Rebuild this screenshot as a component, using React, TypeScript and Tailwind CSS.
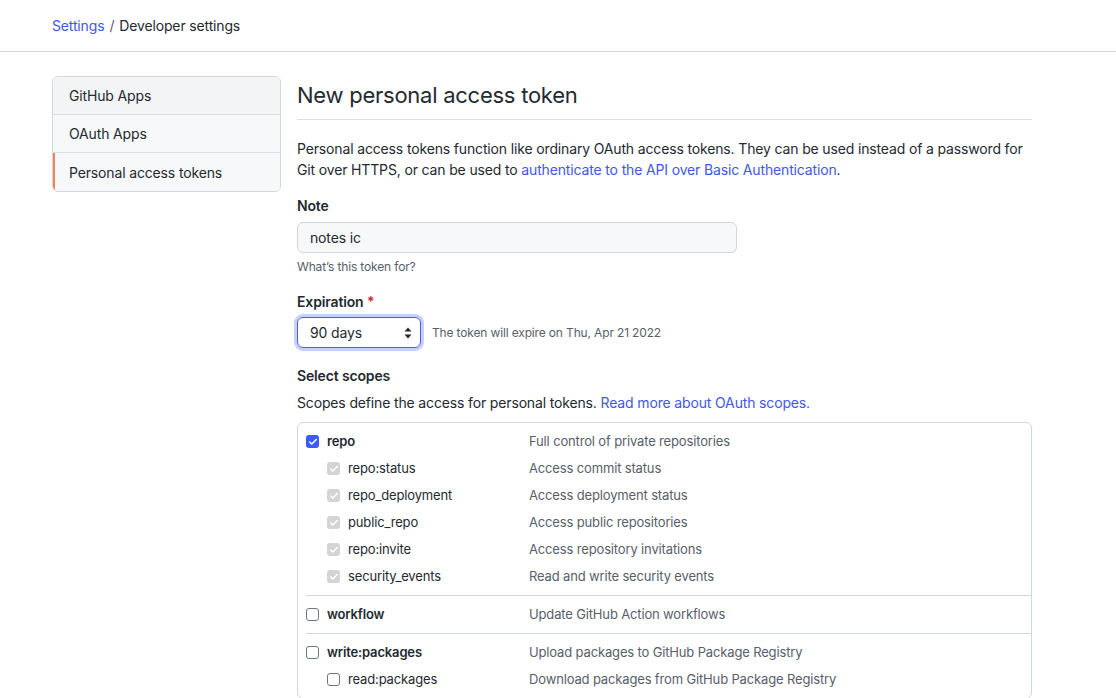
import { Check } from "lucide-react";

type Scope = { name: string; desc: string; checked?: boolean; disabled?: boolean; sub?: boolean };

const groups: Scope[][] = [
  [
    { name: "repo", desc: "Full control of private repositories", checked: true },
    { name: "repo:status", desc: "Access commit status", checked: true, disabled: true, sub: true },
    { name: "repo_deployment", desc: "Access deployment status", checked: true, disabled: true, sub: true },
    { name: "public_repo", desc: "Access public repositories", checked: true, disabled: true, sub: true },
    { name: "repo:invite", desc: "Access repository invitations", checked: true, disabled: true, sub: true },
    { name: "security_events", desc: "Read and write security events", checked: true, disabled: true, sub: true },
  ],
  [{ name: "workflow", desc: "Update GitHub Action workflows" }],
  [
    { name: "write:packages", desc: "Upload packages to GitHub Package Registry" },
    { name: "read:packages", desc: "Download packages from GitHub Package Registry", sub: true },
  ],
];

function Box({ checked, disabled }: { checked?: boolean; disabled?: boolean }) {
  if (checked && disabled) {
    return (
      <span className="w-[13px] h-[13px] rounded-[3px] bg-[#d4d4d4] flex items-center justify-center shrink-0">
        <Check size={10} strokeWidth={3.5} className="text-white" />
      </span>
    );
  }
  if (checked) {
    return (
      <span className="w-[13px] h-[13px] rounded-[3px] bg-[#3d5afe] flex items-center justify-center shrink-0">
        <Check size={10} strokeWidth={3.5} className="text-white" />
      </span>
    );
  }
  return <span className="w-[13px] h-[13px] rounded-[3px] border border-[#6e7781] bg-white shrink-0" />;
}

function ScopeRow({ s }: { s: Scope }) {
  return (
    <div className="flex items-center h-[27px]">
      <div className={`flex items-center w-[223px] ${s.sub ? "pl-[21px]" : ""}`}>
        <Box checked={s.checked} disabled={s.disabled} />
        <span className={`ml-[8px] text-[13px] text-[#24292f] ${s.sub ? "" : "font-semibold"}`}>{s.name}</span>
      </div>
      <span className="text-[13px] text-[#57606a]">{s.desc}</span>
    </div>
  );
}

export default function App() {
  return (
    <div
      className="min-h-screen bg-white text-[#24292f] tracking-[-0.15px]"
      style={{ fontFamily: "Inter, 'Noto Sans', sans-serif" }}
    >
      <div className="h-[52px] border-b border-[#d0d7de] flex items-center px-[52px] text-[14px]">
        <span className="text-[#4257e8]">Settings</span>
        <span className="mx-[5px] text-[#57606a]">/</span>
        <span>Developer settings</span>
      </div>

      <div className="flex px-[52px] pt-[24px] gap-[16px]">
        <nav className="w-[229px] shrink-0 self-start border border-[#d0d7de] rounded-[6px] overflow-hidden text-[14px]">
          <div className="h-[38px] flex items-center px-[16px] bg-[#f3f4f6] border-b border-[#d8dee4]">GitHub Apps</div>
          <div className="h-[38px] flex items-center px-[16px] bg-[#f6f8fa] border-b border-[#d8dee4]">OAuth Apps</div>
          <div className="h-[38px] flex items-center px-[14px] bg-[#f6f8fa] border-l-2 border-[#f0845d]">Personal access tokens</div>
        </nav>

        <main className="w-[735px]">
          <h1 className="text-[22px] tracking-[-0.25px] leading-[38px] border-b border-[#d8dee4] pb-[5px]">
            New personal access token
          </h1>
          <p className="mt-[18px] text-[14px] leading-[21px]">
            Personal access tokens function like ordinary OAuth access tokens. They can be used instead of a password for
            Git over HTTPS, or can be used to <span className="text-[#4257e8]">authenticate to the API over Basic Authentication</span>.
          </p>

          <div className="mt-[15px] text-[14px] font-semibold leading-[21px]">Note</div>
          <div className="mt-[6px] w-[440px] h-[31px] rounded-[6px] border border-[#d0d7de] bg-[#f6f8fa] flex items-center px-[12px] text-[14px]">
            notes ic
          </div>
          <div className="mt-[5px] text-[12px] text-[#57606a] leading-[18px]">What’s this token for?</div>

          <div className="mt-[15px] text-[14px] font-semibold leading-[21px]">
            Expiration <span className="text-[#cf222e]">*</span>
          </div>
          <div className="mt-[5px] flex items-center">
            <div className="w-[124px] h-[31px] rounded-[6px] border border-[#4a5cf0] ring-[3px] ring-[#c9cffb] flex items-center justify-between pl-[12px] pr-[8px] text-[14px]">
              90 days
              <svg width="8" height="12" viewBox="0 0 8 12" fill="#24292f">
                <path d="M4 0.5 L7.5 4.5 H0.5 Z" />
                <path d="M4 11.5 L7.5 7.5 H0.5 Z" />
              </svg>
            </div>
            <span className="ml-[11px] text-[12px] text-[#57606a]">The token will expire on Thu, Apr 21 2022</span>
          </div>

          <div className="mt-[17px] text-[14px] font-semibold leading-[21px]">Select scopes</div>
          <p className="mt-[6px] text-[14px] leading-[21px]">
            Scopes define the access for personal tokens. <span className="text-[#4257e8]">Read more about OAuth scopes.</span>
          </p>

          <div className="mt-[9px] border border-[#d0d7de] rounded-[6px] pl-[8px]">
            {groups.map((g, i) => (
              <div key={i} className={`py-[5px] ${i > 0 ? "border-t border-[#d0d7de]" : ""}`}>
                {g.map((s) => (
                  <ScopeRow key={s.name} s={s} />
                ))}
              </div>
            ))}
          </div>
        </main>
      </div>
    </div>
  );
}
